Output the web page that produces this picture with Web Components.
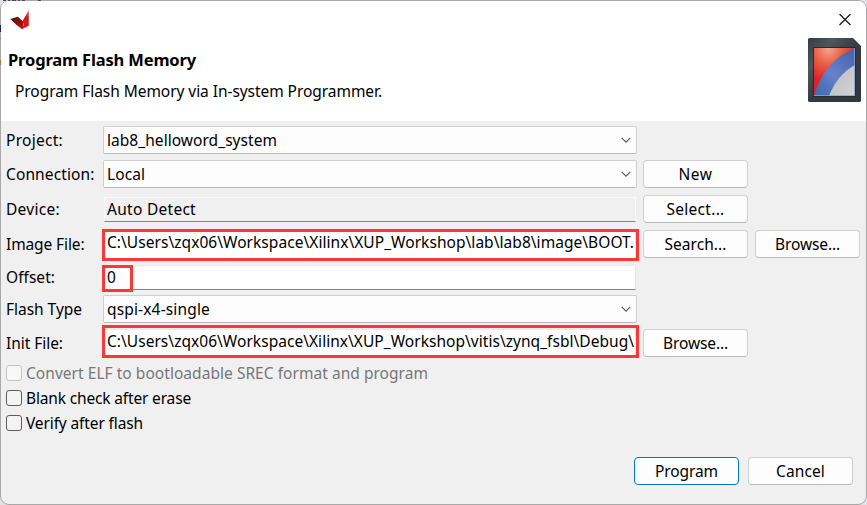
<!DOCTYPE html>
<html lang="en"><head><meta charset="utf-8"><title>Program Flash Memory</title>
<style>
html,body{margin:0;height:100%;overflow:hidden;background:#e2e2e4}
body{font:15.5px/28px "Noto Sans","Open Sans",sans-serif;color:#000}
</style></head><body>
<flash-dialog></flash-dialog>
<script>
// Text run whose tracking is adjusted to fill the width given in "w".
class FitText extends HTMLElement{
  connectedCallback(){
    const r=this.attachShadow({mode:'open'});
    r.innerHTML='<style>:host{display:inline-block;white-space:pre}span{display:inline-block}</style><span><slot></slot></span>';
    const s=r.querySelector('span'),w=+this.getAttribute('w');
    if(w){const n=this.textContent.length;s.style.letterSpacing=((w-s.getBoundingClientRect().width)/n).toFixed(3)+'px';this.style.width=w+'px';}
  }
}
class PushButton extends HTMLElement{
  connectedCallback(){
    this.attachShadow({mode:'open'}).innerHTML='<style>:host{display:flex;justify-content:center;box-sizing:border-box;width:105px;height:28px;line-height:26px;border:1px solid #d0d0d0;border-bottom-color:#bababa;border-radius:4px;background:#fdfdfd}:host([default]){border-color:#0078d4}</style><slot></slot>';
  }
}
class ComboBox extends HTMLElement{
  connectedCallback(){
    this.attachShadow({mode:'open'}).innerHTML='<style>:host{display:flex;justify-content:space-between;align-items:center;box-sizing:border-box;width:534px;height:28px;line-height:26px;padding:0 5px 0 3px;border:1px solid #cfcfcf;border-bottom-color:#b8b8b8;border-radius:2px;background:#fdfdfd}</style><slot></slot><svg width="10" height="6" viewBox="0 0 10 6"><path d="M.7.8 5 5.1 9.3.8" fill="none" stroke="#555" stroke-width="1.1"/></svg>';
  }
}
class TextField extends HTMLElement{
  connectedCallback(){
    this.attachShadow({mode:'open'}).innerHTML='<style>:host{display:block;overflow:hidden;box-sizing:border-box;margin:0 1px;width:532px;height:25px;line-height:23px;padding-left:2px;border:1px solid #e6e6e6;border-top-color:#ebebeb;border-bottom-color:#858585;background:#fff}:host([readonly]){background:#f0f0f0;border-color:#fafafa;border-bottom-color:#858585;margin-top:2px}:host([marked]){height:28px;border-bottom-color:#fff}</style><slot></slot>';
  }
}
class FormRow extends HTMLElement{
  connectedCallback(){
    this.attachShadow({mode:'open'}).innerHTML='<style>:host{display:grid;grid-template-columns:97px 534px 105px 105px;height:28px}::slotted(push-button){margin-left:6px}::slotted(push-button.second){margin-left:13px}</style><slot></slot>';
  }
}
class CheckOption extends HTMLElement{
  connectedCallback(){
    this.attachShadow({mode:'open'}).innerHTML='<style>:host{display:flex;height:25px;line-height:17px}i{box-sizing:border-box;width:16px;height:16px;margin-right:4px;border:1px solid #5d5d5d;border-radius:3px;background:#f4f4f4}:host([disabled]){color:#777}:host([disabled]) i{border-color:#c4c4c4;background:#f8f8f8}</style><i></i><slot></slot>';
  }
}
class CloseIcon extends HTMLElement{
  connectedCallback(){
    this.attachShadow({mode:'open'}).innerHTML='<style>:host{display:block;width:12px;height:12px}svg{display:block}</style><svg width="12" height="12"><path d="M.5 0l11 11M11.5 0l-11 11" stroke="#111" stroke-width="1.2"/></svg>';
  }
}
class VitisIcon extends HTMLElement{
  connectedCallback(){
    this.attachShadow({mode:'open'}).innerHTML='<style>:host{display:block}svg{display:block}</style><svg width="20" height="20"><defs><linearGradient id="g" x1="0" y1="0" x2="1" y2="1"><stop offset="0" stop-color="#5c080b"/><stop offset=".55" stop-color="#8e1012"/><stop offset="1" stop-color="#c81214"/></linearGradient><linearGradient id="h" x1="0" y1="0" x2="0" y2="1"><stop offset="0" stop-color="#e86a6a"/><stop offset=".4" stop-color="#cf1a1c"/><stop offset="1" stop-color="#e81212"/></linearGradient></defs><path d="M.3 9 8 6.7 12.8 11.2 14 17.5 12 19Q6 15 .3 9Z" fill="url(#g)"/><path d="M12.6 11 18.8 0V15.8L12 19 10.5 18 14 16Z" fill="url(#h)"/></svg>';
  }
}
class CardIcon extends HTMLElement{
  connectedCallback(){
    this.attachShadow({mode:'open'}).innerHTML='<style>:host{display:block}svg{display:block}</style><svg width="53" height="64"><defs><linearGradient id="c" x1="0" y1="0" x2="1" y2="1"><stop offset="0" stop-color="#343d43"/><stop offset=".25" stop-color="#4c575e"/><stop offset=".5" stop-color="#343c41"/><stop offset="1" stop-color="#30383d"/></linearGradient><radialGradient id="r" cx=".35" cy="0" r=".7"><stop offset="0" stop-color="#f4a78f"/><stop offset=".5" stop-color="#ea5f45"/><stop offset="1" stop-color="#dd2327"/></radialGradient><linearGradient id="b" x1="0" y1="1" x2=".8" y2="0"><stop offset="0" stop-color="#3a68b4"/><stop offset=".5" stop-color="#6681c9"/><stop offset="1" stop-color="#4a64b0"/></linearGradient><linearGradient id="w" x1="0" y1="0" x2="1" y2="1"><stop offset="0" stop-color="#b9bbbd"/><stop offset="1" stop-color="#d2d4d5"/></linearGradient></defs><path d="M1 0H45L53 8V63L52 64H1L0 63V1Z" fill="url(#c)"/><path d="M5 9H48V59H5Z" fill="#242c31"/><path d="M6 10H47V58H6Z" fill="url(#r)"/><path d="M47 10V58H6Q16 23 47 10Z" fill="url(#b)"/><path d="M47 27V58H21Q29 37 47 27Z" fill="url(#w)"/><path d="M46.5 10V58M6 57.5H47" stroke="#8fa3cf" stroke-opacity=".8"/></svg>';
  }
}
class FlashDialog extends HTMLElement{
  connectedCallback(){
    this.attachShadow({mode:'open'}).innerHTML=`<style>
:host{display:flex;flex-direction:column;position:relative;box-sizing:border-box;width:867px;height:505px;border:1px solid #a8a8a8;border-radius:9px;background:#f0f0f0;overflow:hidden}
header{display:grid;grid-template-columns:1fr 53px;height:120px;box-sizing:border-box;padding:9px 5px 0 7px;background:#fff}
.copy{display:flex;flex-direction:column;align-items:flex-start}
.copy vitis-icon{margin-left:2px}
h1{font-size:16.5px;line-height:24px;margin:18px 0 0;font-weight:700}
.copy .sub{margin:5px 0 0 7px}
.side{display:flex;flex-direction:column;align-items:flex-start}
close-icon{margin:4px 0 12px 31px}
main{display:flex;flex-direction:column;padding:5px 0 0 5px}
.g6{margin-bottom:6px}.g7{margin-bottom:7px}.off{height:25px;margin-bottom:5px;line-height:25px}
.checks{margin-top:8px}
footer{display:flex;gap:9px;justify-content:flex-end;padding:0 13px;margin-top:17px}
.mark{position:absolute;box-sizing:border-box;border:3px solid #fb3838;left:101px;pointer-events:none}
.m1{top:228px;width:537px;height:32px}.m2{top:264px;width:31px;height:27px}.m3{top:324px;width:537px;height:33px}
/* Specks of the window behind, showing along the dialog's edge. */
.behind{position:absolute;left:-1px;top:-1px}
</style>
<header><div class="copy"><vitis-icon></vitis-icon><h1><fit-text w="188">Program Flash Memory</fit-text></h1><fit-text class="sub" w="367">Program Flash Memory via In-system Programmer.</fit-text></div><div class="side"><close-icon></close-icon><card-icon></card-icon></div></header>
<main>
<form-row class="g6"><fit-text w="57">Project:</fit-text><combo-box><fit-text w="170">lab8_helloword_system</fit-text></combo-box></form-row>
<form-row class="g7"><fit-text w="88.5">Connection:</fit-text><combo-box><fit-text w="38">Local</fit-text></combo-box><push-button><fit-text w="34">New</fit-text></push-button></form-row>
<form-row class="g7"><fit-text w="54">Device:</fit-text><text-field readonly><fit-text w="89">Auto Detect</fit-text></text-field><push-button><fit-text w="58">Select...</fit-text></push-button></form-row>
<form-row class="g7"><fit-text w="78.5">Image File:</fit-text><text-field marked><fit-text w="527">C:\\Users\\zqx06\\Workspace\\Xilinx\\XUP_Workshop\\lab\\lab8\\image\\BOOT.</fit-text></text-field><push-button><fit-text w="62">Search...</fit-text></push-button><push-button class="second"><fit-text w="65">Browse...</fit-text></push-button></form-row>
<form-row class="off"><fit-text w="49">Offset:</fit-text><text-field><fit-text>0</fit-text></text-field></form-row>
<form-row class="g6"><fit-text w="76">Flash Type</fit-text><combo-box><fit-text w="103">qspi-x4-single</fit-text></combo-box></form-row>
<form-row><fit-text w="57">Init File:</fit-text><text-field marked><fit-text w="527">C:\\Users\\zqx06\\Workspace\\Xilinx\\XUP_Workshop\\vitis\\zynq_fsbl\\Debug\\</fit-text></text-field><push-button><fit-text w="65">Browse...</fit-text></push-button></form-row>
<div class="checks"><check-option disabled><fit-text w="402">Convert ELF to bootloadable SREC format and program</fit-text></check-option><check-option><fit-text w="165">Blank check after erase</fit-text></check-option><check-option><fit-text w="117">Verify after flash</fit-text></check-option></div>
</main>
<footer><push-button default><fit-text w="63">Program</fit-text></push-button><push-button><fit-text w="49">Cancel</fit-text></push-button></footer>
<div class="mark m1"></div><div class="mark m2"></div><div class="mark m3"></div>`;
  }
}
// Edge of the window behind: its top text row, a selection and a marker.
class BackdropEdge extends HTMLElement{
  connectedCallback(){
    this.attachShadow({mode:'open'}).innerHTML='<style>:host{position:absolute;left:0;top:0;pointer-events:none}svg{display:block}</style><svg width="60" height="70"><path d="M3 .5h3m2 0h2m2 0h4m2 0h2m2 0h3m13 0h3" stroke="#4a4a5c"/><path d="M.5 25v7" stroke="#22226a"/><path d="M.5 38v1" stroke="#777"/><path d="M.5 60v5" stroke="#c07040"/></svg>';
  }
}
Object.entries({'fit-text':FitText,'push-button':PushButton,'combo-box':ComboBox,'text-field':TextField,'form-row':FormRow,'check-option':CheckOption,'close-icon':CloseIcon,'vitis-icon':VitisIcon,'card-icon':CardIcon,'flash-dialog':FlashDialog,'backdrop-edge':BackdropEdge}).forEach(([n,c])=>customElements.define(n,c));
document.body.append(document.createElement('backdrop-edge'));
</script></body></html>
